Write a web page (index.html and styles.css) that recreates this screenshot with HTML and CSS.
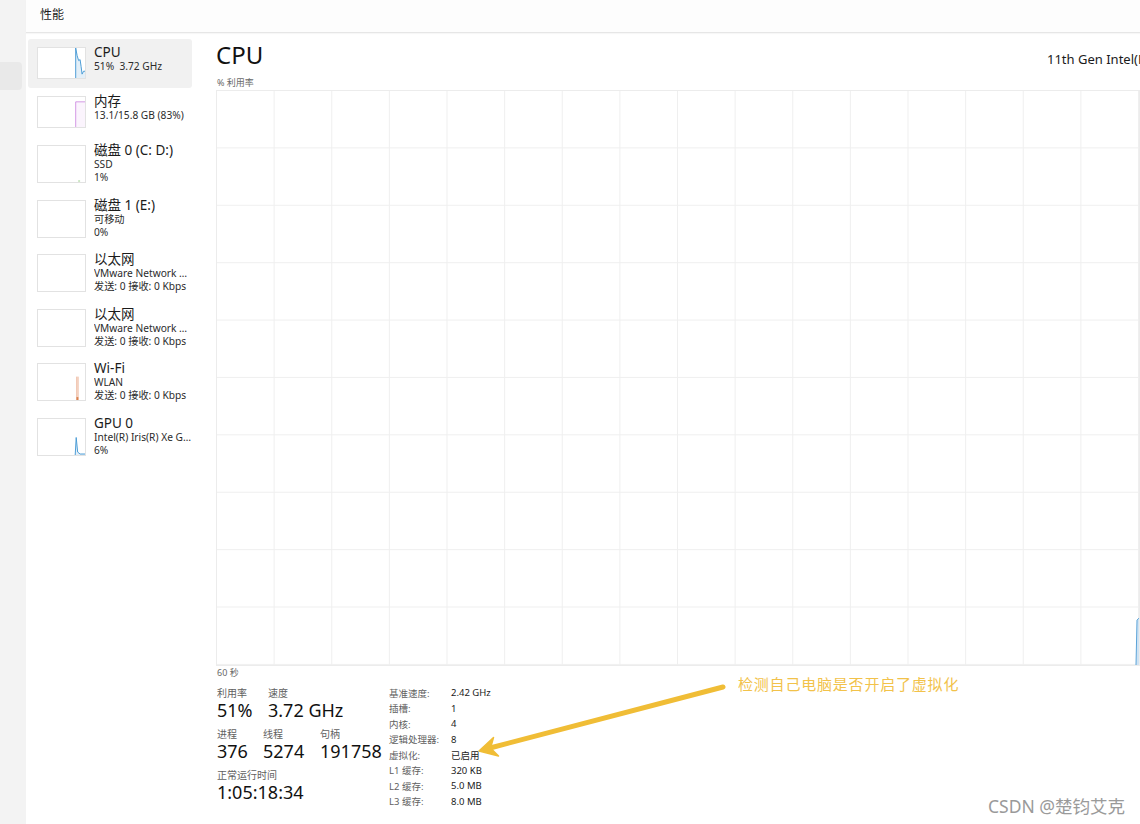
FILE: index.html
```html
<!DOCTYPE html>
<html lang="zh-CN">
<head>
<meta charset="utf-8">
<title>性能</title>
<link rel="stylesheet" href="styles.css">
</head>
<body>
<div class="rail">
  <div class="rail-sel"></div>
</div>
<div class="app">
  <header class="topbar">性能</header>
  <div class="content">
    <nav class="sidebar">
      <div class="item item2 active">
        <div class="thumb">
          <svg viewBox="0 0 48 31" preserveAspectRatio="none"><path d="M38.5,31 L38.5,0 L40,8 L41.5,13 L43,12 L44,19 L45,27 L46.5,24 L48,24 L48,31 Z" fill="#e3eff8"/><path d="M38.5,31 L38.5,0 L40,8 L41.5,13 L43,12 L44,19 L45,27 L46.5,24 L48,24" fill="none" stroke="#4a9bd5" stroke-width="1"/></svg>
        </div>
        <div class="txt"><div class="t">CPU</div><div class="s">51%&nbsp; 3.72 GHz</div></div>
      </div>
      <div class="item item2">
        <div class="thumb">
          <svg viewBox="0 0 48 31" preserveAspectRatio="none"><path d="M38.5,31 L38.5,5 L48,5 L48,31 Z" fill="#fbf4fd"/><path d="M38.5,31 L38.5,5 L48,5" fill="none" stroke="#c77ddd" stroke-width="0.8"/></svg>
        </div>
        <div class="txt"><div class="t">内存</div><div class="s">13.1/15.8 GB (83%)</div></div>
      </div>
      <div class="item item3">
        <div class="thumb">
          <svg viewBox="0 0 48 37" preserveAspectRatio="none"><path d="M41,36 L43,36" stroke="#9bd08a" stroke-width="1"/></svg>
        </div>
        <div class="txt"><div class="t">磁盘 0 (C: D:)</div><div class="s">SSD</div><div class="s">1%</div></div>
      </div>
      <div class="item item3">
        <div class="thumb"></div>
        <div class="txt"><div class="t">磁盘 1 (E:)</div><div class="s">可移动</div><div class="s">0%</div></div>
      </div>
      <div class="item item3">
        <div class="thumb"></div>
        <div class="txt"><div class="t">以太网</div><div class="s">VMware Network Adapter VMnet1</div><div class="s">发送: 0 接收: 0 Kbps</div></div>
      </div>
      <div class="item item3">
        <div class="thumb"></div>
        <div class="txt"><div class="t">以太网</div><div class="s">VMware Network Adapter VMnet8</div><div class="s">发送: 0 接收: 0 Kbps</div></div>
      </div>
      <div class="item item3">
        <div class="thumb">
          <svg viewBox="0 0 48 37" preserveAspectRatio="none"><path d="M39.5,37 L39.5,13 L41,13 L41,37 Z" fill="#fbeae0"/><path d="M39.5,37 L39.5,13 M41,13 L41,37" fill="none" stroke="#e8a584" stroke-width="0.7"/><path d="M39.3,34 L41.2,34 L41.2,37 L39.3,37 Z" fill="#d9824f"/></svg>
        </div>
        <div class="txt"><div class="t">Wi-Fi</div><div class="s">WLAN</div><div class="s">发送: 0 接收: 0 Kbps</div></div>
      </div>
      <div class="item item3">
        <div class="thumb">
          <svg viewBox="0 0 48 37" preserveAspectRatio="none"><path d="M38,37 L39,19 L40.5,34 L43,36 L48,36 L48,37 Z" fill="#e3eff8"/><path d="M38,37 L39,19 L40.5,34 L43,36 L48,36" fill="none" stroke="#4a9bd5" stroke-width="1"/></svg>
        </div>
        <div class="txt"><div class="t">GPU 0</div><div class="s">Intel(R) Iris(R) Xe Graphics</div><div class="s">6%</div></div>
      </div>
    </nav>
    <main class="main">
      <div class="title-row">
        <h1 class="title">CPU</h1>
        <div class="cpu-name">11th Gen Intel(R) Core(TM) i5-1135G7 @ 2.40GHz</div>
      </div>
      <div class="axis-label">% 利用率</div>
      <div class="graph">
        <svg class="graph-data" viewBox="0 0 924 575" preserveAspectRatio="none"><path d="M921,575 L922,530 L924,528 L924,575 Z" fill="#cfe3f3"/><path d="M921,575 L922,530 L924,528" fill="none" stroke="#5aa3d8" stroke-width="1"/></svg>
      </div>
      <div class="axis-label">60 秒</div>
      <div class="stats">
        <div class="stats-left">
          <div class="grp">
            <div class="col w51"><div class="lbl">利用率</div><div class="val">51%</div></div>
            <div class="col"><div class="lbl">速度</div><div class="val">3.72 GHz</div></div>
          </div>
          <div class="grp">
            <div class="col w46"><div class="lbl">进程</div><div class="val">376</div></div>
            <div class="col w57"><div class="lbl">线程</div><div class="val">5274</div></div>
            <div class="col"><div class="lbl">句柄</div><div class="val">191758</div></div>
          </div>
          <div class="grp">
            <div class="col"><div class="lbl">正常运行时间</div><div class="val">1:05:18:34</div></div>
          </div>
        </div>
        <dl class="stats-right">
          <dt>基准速度:</dt><dd>2.42 GHz</dd>
          <dt>插槽:</dt><dd>1</dd>
          <dt>内核:</dt><dd>4</dd>
          <dt>逻辑处理器:</dt><dd>8</dd>
          <dt>虚拟化:</dt><dd>已启用</dd>
          <dt>L1 缓存:</dt><dd>320 KB</dd>
          <dt>L2 缓存:</dt><dd>5.0 MB</dd>
          <dt>L3 缓存:</dt><dd>8.0 MB</dd>
        </dl>
      </div>
    </main>
  </div>
</div>
<div class="note">检测自己电脑是否开启了虚拟化</div>
<svg class="arrow" viewBox="0 0 1140 824" width="1140" height="824">
  <path d="M723,687 L490,748" stroke="#f0bd36" stroke-width="5" stroke-linecap="round"/>
  <polygon points="479,751 493.5,737.5 490.5,748 498.5,756" fill="#f0bd36" stroke="#f0bd36" stroke-width="1.5" stroke-linejoin="round"/>
</svg>
<div class="watermark">CSDN @楚钧艾克</div>
</body>
</html>
```
FILE: styles.css
```css
* { box-sizing: border-box; }
html, body { margin: 0; padding: 0; }
body {
  width: 1140px;
  height: 824px;
  overflow: hidden;
  display: flex;
  background: #ffffff;
  font-family: "Noto Sans", "Noto Sans CJK SC", sans-serif;
  color: #1b1b1b;
  position: relative;
}
.rail {
  width: 26px;
  flex: 0 0 26px;
  background: #f3f3f3;
  padding-top: 62px;
}
.rail-sel {
  width: 22px;
  height: 28px;
  background: #e9e9e9;
  border-radius: 0 4px 4px 0;
}
.app {
  flex: 1;
  display: flex;
  flex-direction: column;
  min-width: 0;
}
.topbar {
  height: 33px;
  padding-left: 14px;
  font-size: 12px;
  line-height: 29px;
  color: #1b1b1b;
  border-bottom: 1px solid #e6e6e6;
  box-shadow: 0 1px 1px rgba(0,0,0,0.03);
  background: #fdfdfd;
}
.content {
  display: flex;
  flex: 1;
  min-height: 0;
}
.sidebar {
  width: 164px;
  flex: 0 0 164px;
  margin-left: 2px;
  padding-top: 6px;
}
.item {
  display: flex;
  gap: 8px;
  padding: 8px 0 0 9px;
  border-radius: 3px;
}
.item2 { height: 49px; }
.item3 { height: 54.5px; }
.item.active { background: #f1f1f1; }
.thumb {
  width: 49px;
  flex: 0 0 49px;
  border: 1px solid #e2e2e2;
  background: #ffffff;
}
.item2 .thumb { height: 32px; }
.item3 .thumb { height: 38px; }
.thumb svg { display: block; width: 100%; height: 100%; }
.txt {
  min-width: 0;
  flex: 1;
  margin-top: -2px;
}
.t {
  font-size: 13.5px;
  line-height: 15px;
  color: #1b1b1b;
  white-space: nowrap;
}
.s {
  font-size: 10.2px;
  line-height: 13px;
  color: #2b2b2b;
  white-space: nowrap;
  overflow: hidden;
  text-overflow: ellipsis;
}
.main {
  flex: 0 0 948px;
  width: 948px;
  padding-left: 24px;
  padding-top: 7px;
}
.title-row {
  display: flex;
  align-items: baseline;
  height: 36px;
}
.title {
  margin: 0;
  font-size: 24px;
  font-weight: 400;
  line-height: 30px;
  color: #111;
}
.cpu-name {
  margin-left: auto;
  width: 93px;
  flex: 0 0 93px;
  white-space: nowrap;
  font-size: 13px;
  color: #1b1b1b;
}
.axis-label {
  font-size: 9px;
  line-height: 14px;
  color: #6a6a6a;
  padding-left: 1px;
}
.graph {
  position: relative;
  width: 924px;
  height: 576px;
  border: 1px solid #ececec;
  background-image:
    linear-gradient(to right, #efefef 1px, transparent 1px),
    linear-gradient(to bottom, #efefef 1px, transparent 1px);
  background-size: calc(922px / 16) calc(574px / 10);
  background-position: -1px -1px;
}
.graph-data {
  position: absolute;
  inset: 0;
  width: 100%;
  height: 100%;
}
.stats {
  display: flex;
  padding-top: 5px;
}
.stats-left {
  width: 173px;
  flex: 0 0 173px;
  padding-left: 1px;
  padding-top: 1px;
}
.grp {
  display: flex;
  margin-bottom: 6px;
}
.col { white-space: nowrap; }
.w51 { width: 51px; }
.w46 { width: 46px; }
.w57 { width: 57px; }
.lbl {
  font-size: 10px;
  line-height: 14px;
  color: #5f5f5f;
}
.val {
  font-size: 18px;
  line-height: 21px;
  color: #111;
}
.stats-right {
  margin: 0;
  display: grid;
  grid-template-columns: 62px auto;
  grid-auto-rows: 15.5px;
  align-items: center;
  font-size: 9.5px;
}
.stats-right dt { color: #5f5f5f; }
.stats-right dd { margin: 0; color: #1b1b1b; }
.note {
  position: absolute;
  left: 738px;
  top: 674px;
  font-size: 15px;
  line-height: 20px;
  letter-spacing: 0.8px;
  color: #f2c24a;
  white-space: nowrap;
}
.arrow {
  position: absolute;
  left: 0;
  top: 0;
  pointer-events: none;
}
.watermark {
  position: absolute;
  left: 988px;
  top: 796px;
  font-size: 17.5px;
  line-height: 20px;
  color: #9a9a9a;
  white-space: nowrap;
}
```
